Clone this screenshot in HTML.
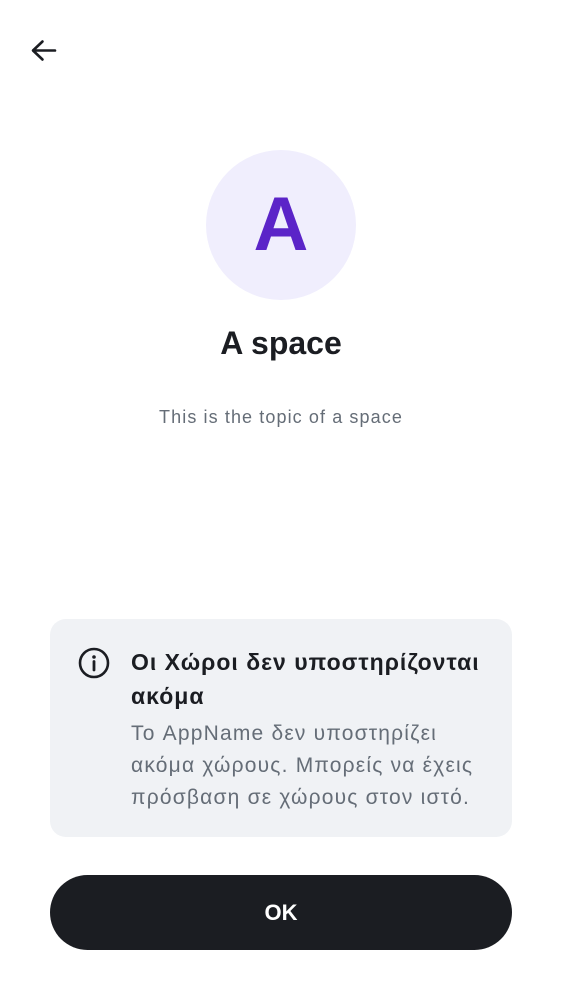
<!DOCTYPE html>
<html><head><meta charset="utf-8"><style>
body{margin:0;width:562px;height:1000px;background:#fff;font-family:"Liberation Sans","DejaVu Sans",sans-serif;position:relative;overflow:hidden}
.abs{position:absolute}
</style></head><body>
<svg class="abs" style="left:28px;top:36px" width="30" height="30" viewBox="0 0 30 30"><path d="M27 14.5H6M14.5 5.5L5 14.5L14.5 23.5" fill="none" stroke="#1b1d22" stroke-width="2.6" stroke-linecap="round" stroke-linejoin="round"/></svg>
<div class="abs" style="left:206px;top:150px;width:150px;height:150px;border-radius:50%;background:#f0eefd;color:#5b24c8;font-weight:bold;font-size:76px;line-height:150px;text-align:center">A</div>
<div class="abs" style="left:0;width:562px;top:325px;text-align:center;font-weight:bold;font-size:32px;color:#1b1d22">A space</div>
<div class="abs" style="left:0;width:562px;top:407px;text-align:center;font-size:18px;color:#656d77;letter-spacing:1.1px">This is the topic of a space</div>
<div class="abs" style="left:50px;top:619px;width:462px;height:218px;border-radius:16px;background:#f0f2f5"></div>
<svg class="abs" style="left:77px;top:646px" width="34" height="34" viewBox="0 0 34 34"><circle cx="17" cy="17" r="14" fill="none" stroke="#1b1d22" stroke-width="2.6"/><circle cx="17" cy="11" r="1.8" fill="#1b1d22"/><path d="M17 15.5V24" stroke="#1b1d22" stroke-width="2.8" stroke-linecap="round"/></svg>
<div class="abs" style="left:131px;top:645px;width:370px;font-size:23px;line-height:34px;color:#1b1d22;font-weight:bold;letter-spacing:1px">Οι Χώροι δεν υποστηρίζονται<br>ακόμα</div>
<div class="abs" style="left:131px;top:718px;width:380px;font-size:21px;line-height:32px;color:#656d77;letter-spacing:1.2px">Το AppName δεν υποστηρίζει<br>ακόμα χώρους. Μπορείς να έχεις<br>πρόσβαση σε χώρους στον ιστό.</div>
<div class="abs" style="left:50px;top:875px;width:462px;height:75px;border-radius:38px;background:#1b1d22;color:#fff;font-weight:bold;font-size:22px;line-height:75px;text-align:center">OK</div>
</body></html>
